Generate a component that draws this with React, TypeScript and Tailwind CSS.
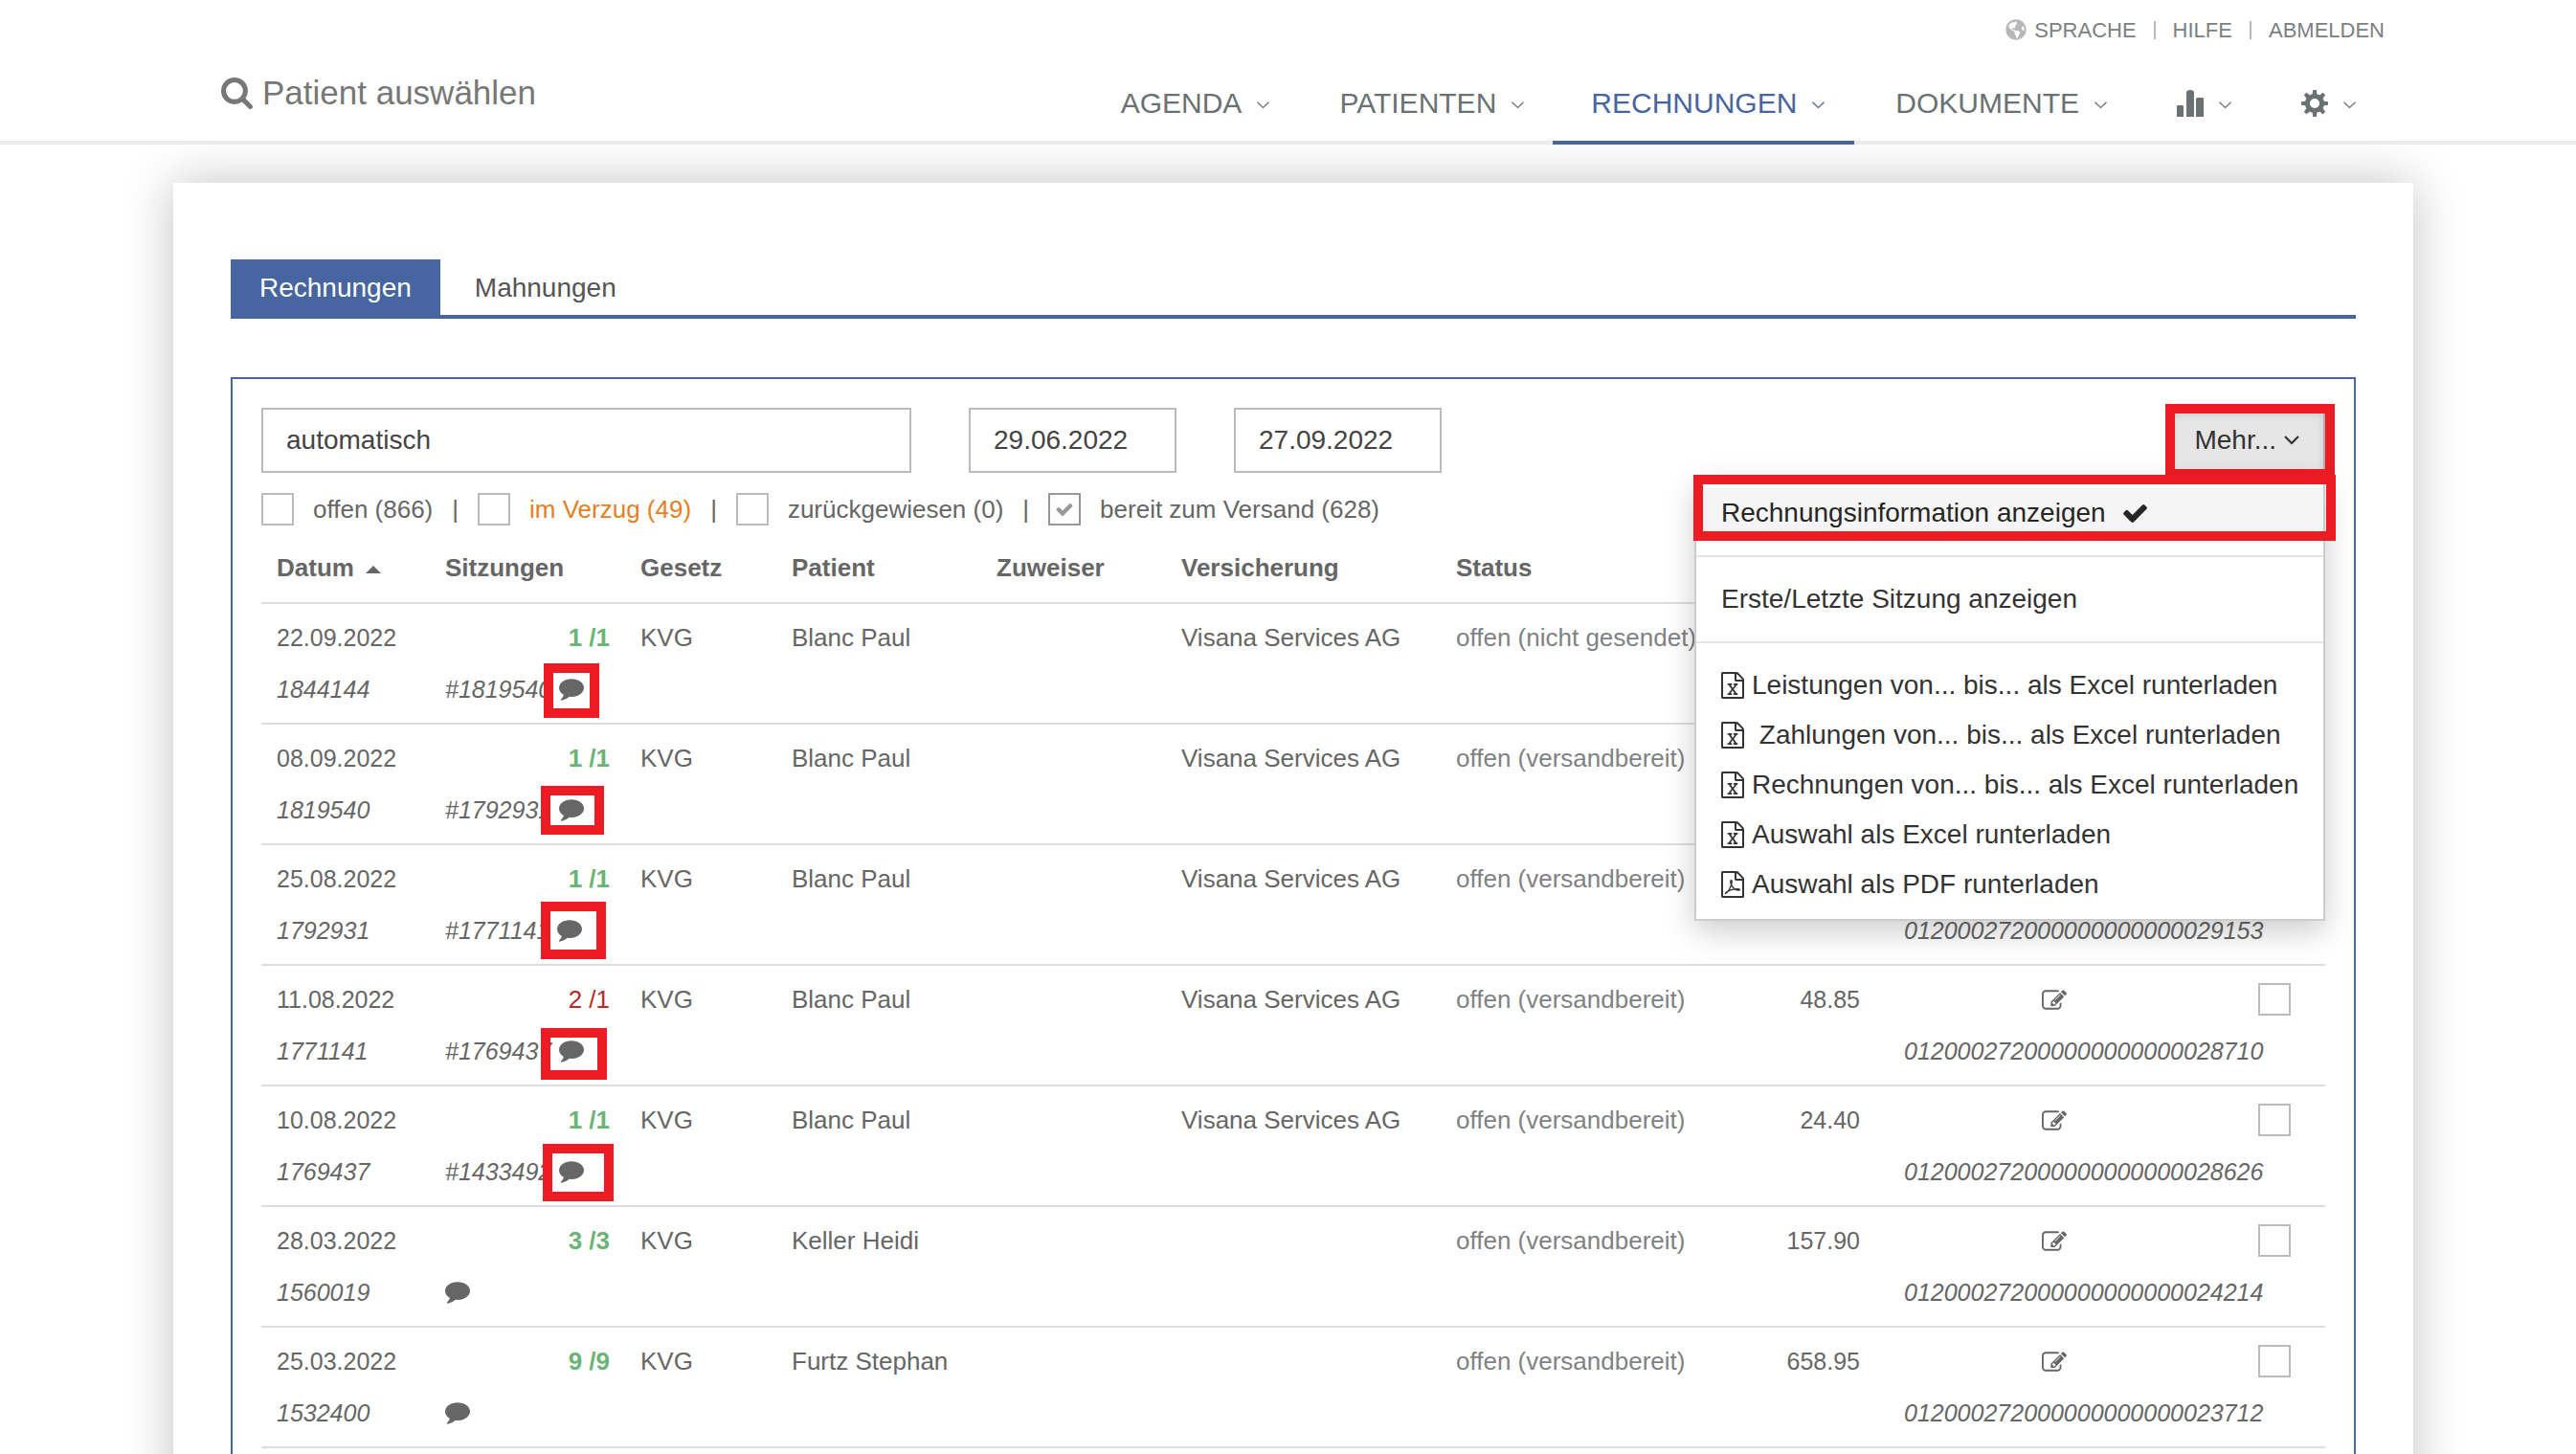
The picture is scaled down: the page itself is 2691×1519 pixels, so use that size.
import type { ReactNode } from "react";
import { FaGlobeAmericas } from "react-icons/fa";

type IconProps = { className?: string };

function Glyph({ d, className, box = "0 0 1792 1792" }: IconProps & { d: string; box?: string }) {
  return (
    <svg viewBox={box} className={className} fill="currentColor" aria-hidden="true">
      <path d={d} />
    </svg>
  );
}

const SearchIcon = ({ className }: IconProps) => (
  <Glyph
    className={className}
    box="64 128 1664 1664"
    d="M1216 832q0-185-131.5-316.5t-316.5-131.5-316.5 131.5-131.5 316.5 131.5 316.5 316.5 131.5 316.5-131.5 131.5-316.5zm512 832q0 52-38 90t-90 38q-54 0-90-38l-343-342q-179 124-399 124-143 0-273.5-55.5t-225-150-150-225-55.5-273.5 55.5-273.5 150-225 225-150 273.5-55.5 273.5 55.5 225 150 150 225 55.5 273.5q0 220-124 399l343 343q37 37 37 90z"
  />
);

const CommentIcon = ({ className }: IconProps) => (
  <Glyph
    className={className}
    box="0 256 1792 1536"
    d="M1792 896q0 174-120 321.5t-326 233-450 85.5q-70 0-145-8-198 175-460 242-49 14-114 22h-5q-15 0-27-10.5t-16-27.5v-1q-3-4-.5-12t2-10 4.5-9.5l6-9 7-8.5 8-9q7-8 31-34.5t34.5-38 31-39.5 32.5-51 27-59 26-76q-157-89-247.5-220t-90.5-281q0-130 71-248.5t191-204.5 286-136.5 348-50.5 348 50.5 286 136.5 191 204.5 71 248.5z"
  />
);

const CheckIcon = ({ className }: IconProps) => (
  <Glyph
    className={className}
    box="121 334 1550 1188"
    d="M1671 566q0 40-28 68l-724 724-136 136q-28 28-68 28t-68-28l-136-136-362-362q-28-28-28-68t28-68l136-136q28-28 68-28t68 28l294 295 656-657q28-28 68-28t68 28l136 136q28 28 28 68z"
  />
);

const EditIcon = ({ className }: IconProps) => (
  <Glyph
    className={className}
    box="0 128 1792 1408"
    d="M888 1184l116-116-152-152-116 116v56h96v96h56zm440-720q-16-16-33 1l-350 350q-17 17-1 33t33-1l350-350q17-17 1-33zm80 594v190q0 119-84.5 203.5t-203.5 84.5h-832q-119 0-203.5-84.5t-84.5-203.5v-832q0-119 84.5-203.5t203.5-84.5h832q63 0 117 25 15 7 18 23 3 17-9 29l-49 49q-14 14-32 8-23-6-45-6h-832q-66 0-113 47t-47 113v832q0 66 47 113t113 47h832q66 0 113-47t47-113v-126q0-13 9-22l64-64q15-15 35-7t20 29zm-96-738l288 288-672 672h-288v-288zm444 132l-92 92-288-288 92-92q28-28 68-28t68 28l152 152q28 28 28 68t-28 68z"
  />
);

const ExcelIcon = ({ className }: IconProps) => (
  <Glyph
    className={className}
    box="128 0 1536 1792"
    d="M1596 380q28 28 48 76t20 88v1152q0 40-28 68t-68 28h-1344q-40 0-68-28t-28-68v-1600q0-40 28-68t68-28h896q40 0 88 20t76 48zm-444-244v376h376q-10-29-22-41l-313-313q-12-12-41-22zm384 1528v-1024h-416q-40 0-68-28t-28-68v-416h-768v1536h1280zm-979-234v106h281v-106h-75l103-161q5-7 10-16.5t7.5-13.5 3.5-4h2q1 4 5 10 2 4 4.5 7.5t6 8 6.5 8.5l107 161h-76v106h291v-106h-68l-192-273 195-282h67v-107h-279v107h74l-103 159q-4 7-10 16.5t-9 13.5l-2 3h-2q-1-4-5-10-6-11-17-23l-106-159h76v-107h-290v107h68l189 272-194 283h-68z"
  />
);

const PdfIcon = ({ className }: IconProps) => (
  <svg viewBox="128 0 1536 1792" className={className} fill="currentColor" aria-hidden="true">
    <path d="M1596 380q28 28 48 76t20 88v1152q0 40-28 68t-68 28h-1344q-40 0-68-28t-28-68v-1600q0-40 28-68t68-28h896q40 0 88 20t76 48zm-444-244v376h376q-10-29-22-41l-313-313q-12-12-41-22zm384 1528v-1024h-416q-40 0-68-28t-28-68v-416h-768v1536h1280z" />
    <path
      d="M420 1500c90-20 240-230 330-440 70-170 110-320 90-400-20-60-90-50-90 20 0 200 150 480 340 560 120 50 270 50 280 10 10-50-150-70-330-40-190 30-380 90-500 160-90 50-140 110-120 130z"
      fill="none"
      stroke="currentColor"
      strokeWidth="84"
    />
  </svg>
);

const AngleDown = ({ className }: IconProps) => (
  <svg viewBox="0 0 16 10" className={className} fill="none" stroke="currentColor" aria-hidden="true">
    <path d="M1 1l7 7 7-7" strokeWidth="2.2" />
  </svg>
);

const ThinAngle = ({ className }: IconProps) => (
  <svg viewBox="0 0 13 8" className={className} fill="none" stroke="currentColor" aria-hidden="true">
    <path d="M.5.8l6 5.6 6-5.6" strokeWidth="1.3" />
  </svg>
);

const BarsIcon = () => (
  <svg viewBox="0 0 28 28" className="size-7" fill="currentColor" aria-hidden="true">
    <path d="M0 28V17l1-1h5l1 1v11zM10 28V3q0-3 4-3t4 3v25zM20 28V9l1-1h6l1 1v19z" />
  </svg>
);

const TEETH = [0, 45, 90, 135, 180, 225, 270, 315];

const GearIcon = () => (
  <svg viewBox="0 0 28 28" className="size-7" fill="currentColor" aria-hidden="true">
    <circle cx="14" cy="14" r="7.6" fill="none" stroke="currentColor" strokeWidth="5" />
    {TEETH.map((angle) => (
      <path key={angle} d="M11.4 6L12.2 0h3.6l.8 6z" transform={`rotate(${angle} 14 14)`} />
    ))}
  </svg>
);

const navigation: { label: string; content: ReactNode; active?: boolean }[] = [
  { label: "Agenda", content: "AGENDA" },
  { label: "Patienten", content: "PATIENTEN" },
  { label: "Rechnungen", content: "RECHNUNGEN", active: true },
  { label: "Dokumente", content: "DOKUMENTE" },
  { label: "Statistik", content: <BarsIcon /> },
  { label: "Einstellungen", content: <GearIcon /> },
];

const filters = [
  { id: "offen", label: "offen (866)", checked: false, color: "text-[#666]" },
  { id: "verzug", label: "im Verzug (49)", checked: false, color: "text-[#e67e22]" },
  { id: "zurueck", label: "zurückgewiesen (0)", checked: false, color: "text-[#666]" },
  { id: "bereit", label: "bereit zum Versand (628)", checked: true, color: "text-[#666]" },
];

const downloads = [
  { icon: ExcelIcon, label: "Leistungen von... bis... als Excel runterladen" },
  { icon: ExcelIcon, label: "\u00a0Zahlungen von... bis... als Excel runterladen" },
  { icon: ExcelIcon, label: "Rechnungen von... bis... als Excel runterladen" },
  { icon: ExcelIcon, label: "Auswahl als Excel runterladen" },
  { icon: PdfIcon, label: "Auswahl als PDF runterladen" },
];

type Invoice = {
  date: string;
  number: string;
  sessions: string;
  overrun?: boolean;
  previous?: string;
  patient: string;
  insurance?: string;
  status: string;
  amount?: string;
  reference?: string;
  mark?: string;
};

const VISANA = "Visana Services AG";

const invoices: Invoice[] = [
  {
    date: "22.09.2022",
    number: "1844144",
    sessions: "1 /1",
    previous: "#1819540",
    patient: "Blanc Paul",
    insurance: VISANA,
    status: "offen (nicht gesendet)",
    mark: "-left-4 -top-4 h-[57px] w-[58px]",
  },
  {
    date: "08.09.2022",
    number: "1819540",
    sessions: "1 /1",
    previous: "#1792931",
    patient: "Blanc Paul",
    insurance: VISANA,
    status: "offen (versandbereit)",
    mark: "-left-[19px] -top-3.5 h-[51px] w-[66px]",
  },
  {
    date: "25.08.2022",
    number: "1792931",
    sessions: "1 /1",
    previous: "#1771141",
    patient: "Blanc Paul",
    insurance: VISANA,
    status: "offen (versandbereit)",
    reference: "012000272000000000000029153",
    mark: "-left-[17px] -top-[19px] h-[60px] w-[68px]",
  },
  {
    date: "11.08.2022",
    number: "1771141",
    sessions: "2 /1",
    overrun: true,
    previous: "#1769437",
    patient: "Blanc Paul",
    insurance: VISANA,
    status: "offen (versandbereit)",
    amount: "48.85",
    reference: "012000272000000000000028710",
    mark: "-left-[19px] -top-[13px] h-[54px] w-[69px]",
  },
  {
    date: "10.08.2022",
    number: "1769437",
    sessions: "1 /1",
    previous: "#1433492",
    patient: "Blanc Paul",
    insurance: VISANA,
    status: "offen (versandbereit)",
    amount: "24.40",
    reference: "012000272000000000000028626",
    mark: "-left-[17px] -top-[18px] h-[60px] w-[74px]",
  },
  {
    date: "28.03.2022",
    number: "1560019",
    sessions: "3 /3",
    patient: "Keller Heidi",
    status: "offen (versandbereit)",
    amount: "157.90",
    reference: "012000272000000000000024214",
  },
  {
    date: "25.03.2022",
    number: "1532400",
    sessions: "9 /9",
    patient: "Furtz Stephan",
    status: "offen (versandbereit)",
    amount: "658.95",
    reference: "012000272000000000000023712",
  },
];

function Header() {
  return (
    <header className="relative flex items-stretch justify-between border-b-4 border-[#ececec] bg-white pr-[200px] pl-[231px]">
      <a href="#patient" className="flex items-center gap-2.5 pt-12 text-[35px] text-[#777]">
        <SearchIcon className="size-[33px]" />
        Patient auswählen
      </a>
      <div className="flex flex-col items-end">
        <div className="flex h-[62px] items-center gap-[18px] text-[22px] text-[#7b8083]">
          <a href="#sprache" className="flex items-center gap-2">
            <FaGlobeAmericas className="size-[22px] text-[#b8b8b8]" />
            SPRACHE
          </a>
          <span className="h-[19px] w-0.5 bg-[#b8b8b8]" />
          <a href="#hilfe">HILFE</a>
          <span className="h-[19px] w-0.5 bg-[#b8b8b8]" />
          <a href="#abmelden">ABMELDEN</a>
        </div>
        <nav className="-mb-1 flex">
          {navigation.map((item) => (
            <a
              key={item.label}
              href={`#${item.label.toLowerCase()}`}
              aria-label={item.label}
              className={
                item.active
                  ? "flex h-[89px] items-center gap-4 border-b-4 border-[#4765a0] pt-1.5 pr-[31px] pl-10 text-[30px] text-[#4765a0]"
                  : "flex h-[89px] items-center gap-4 pt-1.5 pr-[30px] pb-1 pl-[43px] text-[30px] text-[#6a7173]"
              }
            >
              {item.content}
              <ThinAngle className="mt-1 h-2 w-[13px]" />
            </a>
          ))}
        </nav>
      </div>
    </header>
  );
}

function Tabs() {
  return (
    <div className="flex gap-1.5 border-b-4 border-[#4765a0] text-[28px] leading-[56px]">
      <a href="#rechnungen" className="-mb-1 bg-[#4765a0] px-[30px] pt-0.5 pb-1 text-white">
        Rechnungen
      </a>
      <a href="#mahnungen" className="px-[30px] pt-0.5 text-[#555]">
        Mahnungen
      </a>
    </div>
  );
}

function MoreMenu() {
  return (
    <div className="relative ml-auto">
      <button
        type="button"
        className="flex h-[68px] items-center gap-2 border-2 border-[#adadad] bg-[#e6e6e6] px-[25px] text-[28px] text-[#333] shadow-[inset_0_5px_9px_rgba(0,0,0,0.125)]"
      >
        Mehr...
        <AngleDown className="h-2.5 w-4" />
      </button>

      <div className="absolute top-full right-0 z-10 mt-1 w-[659px] border-2 border-[#ccc] bg-white py-2.5 text-[28px] leading-[52px] text-[#333] shadow-[0_11px_30px_rgba(0,0,0,0.2)]">
        <a href="#info" className="relative flex items-center gap-[18px] bg-[#f5f5f5] pl-[26px] text-[#262626]">
          Rechnungsinformation anzeigen
          <CheckIcon className="h-[19px] w-[25px]" />
          <span className="absolute -top-3.5 -right-[13px] -bottom-[3px] -left-[3px] border-[10px] border-[#ed1c24]" />
        </a>
        <hr className="my-[18px] border-t-2 border-[#e5e5e5]" />
        <a href="#sitzung" className="block pl-[26px]">
          Erste/Letzte Sitzung anzeigen
        </a>
        <hr className="my-[18px] border-t-2 border-[#e5e5e5]" />
        {downloads.map(({ icon: Icon, label }) => (
          <a key={label} href="#download" className="flex items-center gap-2 pl-[26px] whitespace-nowrap">
            <Icon className="h-7 w-6" />
            {label}
          </a>
        ))}
      </div>
      <span className="pointer-events-none absolute -top-1 -right-2.5 -bottom-1.5 -left-[3px] border-[10px] border-[#ed1c24]" />
    </div>
  );
}

function FilterBar() {
  return (
    <>
      <div className="flex gap-[60px]">
        <input
          type="text"
          aria-label="Suche"
          defaultValue="automatisch"
          className="h-[68px] w-[679px] border-2 border-[#bbb] px-6 text-[28px] text-[#444]"
        />
        <input
          type="text"
          aria-label="Datum von"
          defaultValue="29.06.2022"
          className="h-[68px] w-[217px] border-2 border-[#bbb] px-6 text-[28px] text-[#444]"
        />
        <input
          type="text"
          aria-label="Datum bis"
          defaultValue="27.09.2022"
          className="h-[68px] w-[217px] border-2 border-[#bbb] px-6 text-[28px] text-[#444]"
        />
        <MoreMenu />
      </div>
      <div className="mt-[21px] flex items-center gap-5 text-[26px] leading-[34px]">
        {filters.map((filter, index) => (
          <div key={filter.id} className="flex items-center gap-5">
            {index > 0 && <span>|</span>}
            <span className="grid place-items-center">
              <input
                id={filter.id}
                type="checkbox"
                defaultChecked={filter.checked}
                className="col-start-1 row-start-1 size-[34px] appearance-none border-2 border-[#bbb] checked:border-[#999]"
              />
              {filter.checked && (
                <CheckIcon className="pointer-events-none col-start-1 row-start-1 h-[13px] w-[18px] text-[#999]" />
              )}
            </span>
            <label htmlFor={filter.id} className={filter.color}>
              {filter.label}
            </label>
          </div>
        ))}
      </div>
    </>
  );
}

function InvoiceRows({ invoice }: { invoice: Invoice }) {
  return (
    <tbody>
      <tr className="h-[62px] [&>td]:pt-2">
        <td className="pl-4 text-[25px]">{invoice.date}</td>
        <td
          className={
            invoice.overrun ? "pr-4 text-right text-[#b52b27]" : "pr-4 text-right font-bold text-[#6ab476]"
          }
        >
          {invoice.sessions}
        </td>
        <td className="pl-4">KVG</td>
        <td className="pl-4">{invoice.patient}</td>
        <td />
        <td className="pl-4">{invoice.insurance}</td>
        <td className="pl-4 text-[#7f8285]">{invoice.status}</td>
        <td className="pr-4 text-right text-[25px]">{invoice.amount}</td>
        <td>
          <button type="button" aria-label="Bearbeiten" className="mx-auto block">
            <EditIcon className="h-[21px] w-[26px]" />
          </button>
        </td>
        <td className="pr-9">
          <input
            type="checkbox"
            aria-label={`Rechnung ${invoice.number} auswählen`}
            className="ml-auto block size-[34px] appearance-none border-2 border-[#bbb]"
          />
        </td>
      </tr>
      <tr className="h-16 text-[25px] italic [&>td]:border-b-2 [&>td]:border-[#ddd] [&>td]:pb-2">
        <td className="pl-4">{invoice.number}</td>
        <td className="pl-4">
          <div className="flex items-center gap-2">
            {invoice.previous}
            <span className="relative">
              <CommentIcon className="h-[23px] w-[26px]" />
              {invoice.mark && (
                <span className={`absolute border-[10px] border-[#ed1c24] ${invoice.mark}`} />
              )}
            </span>
          </div>
        </td>
        <td colSpan={6} />
        <td colSpan={2} className="pl-[30px]">
          {invoice.reference}
        </td>
      </tr>
    </tbody>
  );
}

function InvoiceTable() {
  return (
    <table className="mt-2 w-full table-fixed border-separate border-spacing-0 text-[26px] leading-[34px] whitespace-nowrap">
      <colgroup>
        <col className="w-[176px]" />
        <col className="w-[204px]" />
        <col className="w-[158px]" />
        <col className="w-[214px]" />
        <col className="w-[193px]" />
        <col />
        <col className="w-[285px]" />
        <col className="w-[169px]" />
        <col className="w-[374px]" />
        <col className="w-[96px]" />
      </colgroup>
      <thead>
        <tr className="h-[74px] text-left [&>th]:border-b-2 [&>th]:border-[#ddd] [&>th]:pl-4">
          <th>
            <span className="flex items-center gap-3">
              Datum
              <svg viewBox="0 0 16 8" className="mt-1 h-2 w-4" fill="currentColor" aria-hidden="true">
                <path d="M8 0l8 8H0z" />
              </svg>
            </span>
          </th>
          <th>Sitzungen</th>
          <th>Gesetz</th>
          <th>Patient</th>
          <th>Zuweiser</th>
          <th>Versicherung</th>
          <th>Status</th>
          <th />
          <th />
          <th />
        </tr>
      </thead>
      {invoices.map((invoice) => (
        <InvoiceRows key={invoice.number} invoice={invoice} />
      ))}
    </table>
  );
}

export default function App() {
  return (
    <div className="h-screen overflow-hidden bg-white font-['Liberation_Sans',Arial,sans-serif] text-[#666]">
      <Header />
      <main className="mt-10 mr-[170px] ml-[181px] bg-white px-[60px] pt-20 pb-20 shadow-[0_0_50px_rgba(0,0,0,0.24)]">
        <Tabs />
        <section className="mt-[61px] border-2 border-[#4765a0] px-[30px] pt-[30px] pb-20">
          <FilterBar />
          <InvoiceTable />
        </section>
      </main>
    </div>
  );
}
